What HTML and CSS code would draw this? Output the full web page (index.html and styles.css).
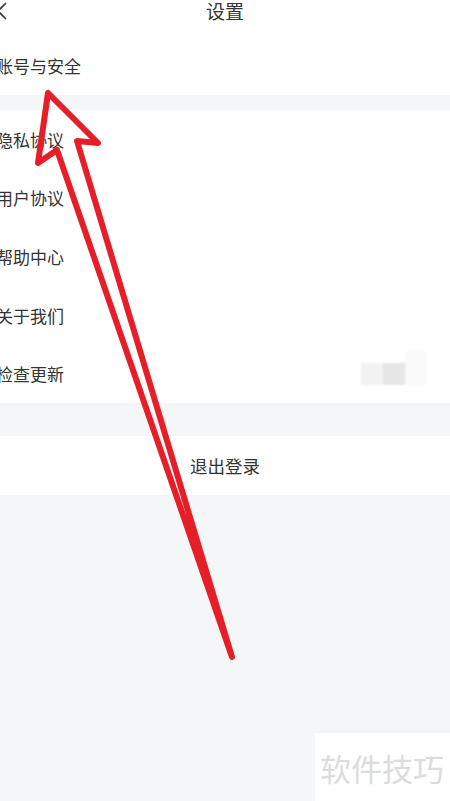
FILE: index.html
```html
<!DOCTYPE html>
<html lang="zh">
<head>
<meta charset="utf-8">
<link rel="stylesheet" href="styles.css">
</head>
<body>
<div class="page">
  <header class="header">
    <svg class="back" width="12" height="22" viewBox="0 0 12 22"><polyline points="6,3 -2,11 6,19" fill="none" stroke="#333" stroke-width="1.6"/></svg>
    <div class="title">设置</div>
  </header>
  <section class="group">
    <div class="row first"><span class="label">账号与安全</span></div>
  </section>
  <section class="group list">
    <div class="row"><span class="label">隐私协议</span></div>
    <div class="row"><span class="label">用户协议</span></div>
    <div class="row"><span class="label">帮助中心</span></div>
    <div class="row"><span class="label">关于我们</span></div>
    <div class="row"><span class="label">检查更新</span><span class="blur"><i class="b1"></i><i class="b2"></i><i class="b3"></i></span></div>
  </section>
  <section class="group logout">
    <div class="logout-btn">退出登录</div>
  </section>
  <div class="watermark">软件技巧</div>
  <svg class="arrow" width="450" height="801" viewBox="0 0 450 801">
    <path d="M232,657 L77,141 L98,143 L48,93 L38,163 L57,150 Z" fill="none" stroke="#e61e28" stroke-width="6" stroke-linejoin="round" stroke-linecap="round"/>
  </svg>
</div>
</body>
</html>
```

FILE: styles.css
```css
* { box-sizing: border-box; }
html, body {
  margin: 0;
  padding: 0;
  background: #f5f6f8;
  font-family: "Noto Sans CJK SC", "Noto Sans", sans-serif;
  color: #333;
}
.page {
  position: relative;
  width: 450px;
  height: 801px;
  overflow: hidden;
  background: #f5f6f8;
}
.header {
  height: 36px;
  background: #fff;
  position: relative;
  display: flex;
  justify-content: center;
}
.back {
  position: absolute;
  left: 0;
  top: 0;
}
.title {
  font-size: 19px;
  line-height: 21px;
  color: #333;
}
.group {
  background: #fff;
}
.row {
  display: flex;
  align-items: center;
  height: 58.6px;
  padding-right: 23px;
}
.row.first {
  height: 59px;
}
.list {
  margin-top: 15px;
}
.label {
  font-size: 17px;
  margin-left: -4px;
  color: #333;
}
.blur {
  margin-left: auto;
  display: flex;
  align-items: center;
  filter: blur(1px);
}
.blur i {
  display: block;
  width: 22px;
  height: 22px;
}
.blur .b1 { background: #f2f2f2; }
.blur .b2 { background: #e6e6e6; }
.blur .b3 { background: #fafafa; height: 34px; margin-top: -12px; }
.logout {
  margin-top: 33px;
}
.logout-btn {
  height: 59px;
  display: flex;
  align-items: center;
  justify-content: center;
  font-size: 17.5px;
  color: #333;
}
.watermark {
  position: absolute;
  left: 315px;
  top: 733px;
  width: 135px;
  height: 68px;
  background: #fff;
  font-size: 31px;
  color: #dcdcdc;
  display: flex;
  align-items: center;
  padding-left: 5px;
}
.arrow {
  position: absolute;
  left: 0;
  top: 0;
  pointer-events: none;
}
```
